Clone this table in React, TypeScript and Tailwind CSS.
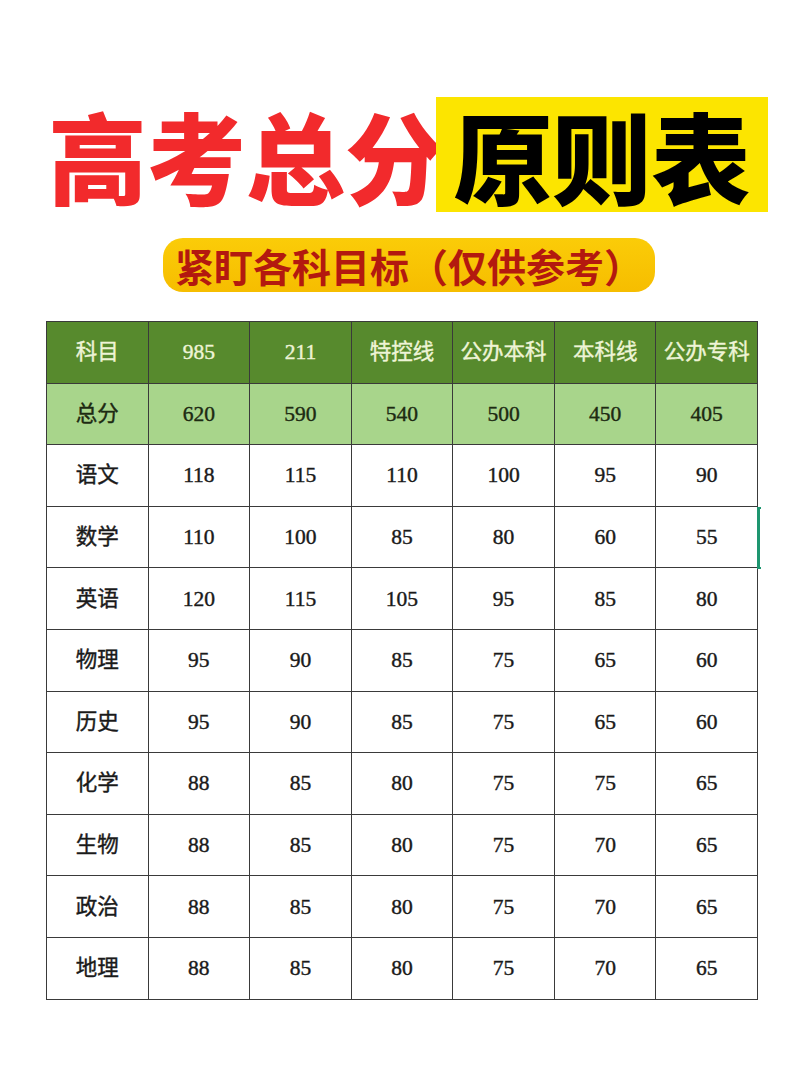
const HEAD = ["科目", "985", "211", "特控线", "公办本科", "本科线", "公办专科"];
const TOTAL = ["总分", "620", "590", "540", "500", "450", "405"];
const ROWS = [
  ["语文", "118", "115", "110", "100", "95", "90"],
  ["数学", "110", "100", "85", "80", "60", "55"],
  ["英语", "120", "115", "105", "95", "85", "80"],
  ["物理", "95", "90", "85", "75", "65", "60"],
  ["历史", "95", "90", "85", "75", "65", "60"],
  ["化学", "88", "85", "80", "75", "75", "65"],
  ["生物", "88", "85", "80", "75", "70", "65"],
  ["政治", "88", "85", "80", "75", "70", "65"],
  ["地理", "88", "85", "80", "75", "70", "65"],
];

const cjk = "font-['Noto_Sans_CJK_SC',sans-serif]";
const cell =
  "h-[61.6px] flex items-center justify-center border-r border-b border-[#3a3a3a] font-['Liberation_Serif','Noto_Sans_CJK_SC',serif] text-[21.5px] [-webkit-text-stroke:0.4px_currentColor]";

const Row = ({ items, className }: { items: string[]; className: string }) => (
  <>
    {items.map((t, i) => (
      <div key={i} className={`${cell} ${className}`}>
        {t}
      </div>
    ))}
  </>
);

export default function App() {
  return (
    <div className="w-[800px] h-[1069px] bg-white pt-[97px]">
      {/* title */}
      <div className={`flex items-center pl-[48px] ${cjk}`}>
        <span className="text-[99px] leading-none font-black text-[#f22a2c]">高考总分</span>
        <div className="-ml-2 h-[115px] w-[332px] bg-[#fce500] flex items-center justify-center">
          <span className="text-[99px] leading-none font-black text-black">原则表</span>
        </div>
      </div>

      {/* subtitle */}
      <div className="flex justify-center mt-[26px] pl-[18px]">
        <div
          className={`h-[54px] w-[492px] rounded-[20px] bg-gradient-to-b from-[#fbcc08] to-[#f6bd00] flex items-center justify-center ${cjk}`}
        >
          <span className="text-[39px] leading-none font-bold text-[#b3190f]">紧盯各科目标（仅供参考）</span>
        </div>
      </div>

      {/* table */}
      <div className="relative ml-[46px] mt-[29px] w-[712px]">
        <div className="grid grid-cols-7 border-l border-t border-[#3a3a3a]">
          <Row items={HEAD} className="bg-[#578a2d] text-[#eef4d6]" />
          <Row items={TOTAL} className="bg-[#a8d58b] text-[#1d2a12]" />
          {ROWS.map((r, i) => (
            <Row key={i} items={r} className="bg-white text-[#1a1a1a]" />
          ))}
        </div>
        {/* selection marker */}
        <div className="absolute left-[711px] top-[186px] h-[62px] w-[4px] flex flex-col justify-between">
          <div className="h-[2px] w-[4px] bg-[#1e9670]" />
          <div className="absolute left-0 top-0 h-full w-[3px] bg-[#1e9670]" />
          <div className="h-[2px] w-[4px] bg-[#1e9670]" />
        </div>
      </div>
    </div>
  );
}
